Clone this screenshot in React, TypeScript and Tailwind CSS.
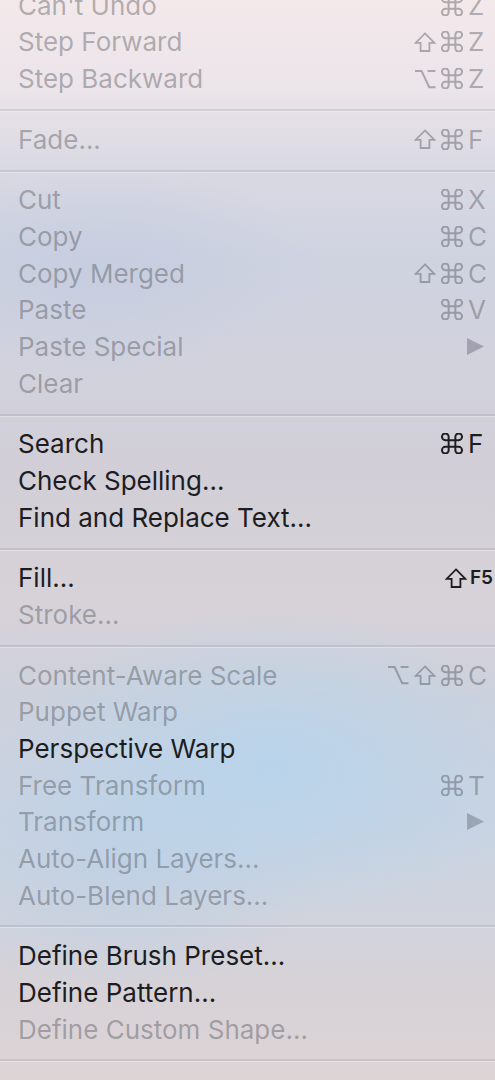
import React from 'react'

type Item = {
  label: string
  enabled?: boolean
  keys?: string[]
  fkey?: string
  submenu?: boolean
}

type Entry = Item | 'sep'

const menu: Entry[] = [
  { label: "Can't Undo", keys: ['cmd', 'Z'] },
  { label: 'Step Forward', keys: ['shift', 'cmd', 'Z'] },
  { label: 'Step Backward', keys: ['opt', 'cmd', 'Z'] },
  'sep',
  { label: 'Fade...', keys: ['shift', 'cmd', 'F'] },
  'sep',
  { label: 'Cut', keys: ['cmd', 'X'] },
  { label: 'Copy', keys: ['cmd', 'C'] },
  { label: 'Copy Merged', keys: ['shift', 'cmd', 'C'] },
  { label: 'Paste', keys: ['cmd', 'V'] },
  { label: 'Paste Special', submenu: true },
  { label: 'Clear' },
  'sep',
  { label: 'Search', enabled: true, keys: ['cmd', 'F'] },
  { label: 'Check Spelling...', enabled: true },
  { label: 'Find and Replace Text...', enabled: true },
  'sep',
  { label: 'Fill...', enabled: true, fkey: 'F5' },
  { label: 'Stroke...' },
  'sep',
  { label: 'Content-Aware Scale', keys: ['opt', 'shift', 'cmd', 'C'] },
  { label: 'Puppet Warp' },
  { label: 'Perspective Warp', enabled: true },
  { label: 'Free Transform', keys: ['cmd', 'T'] },
  { label: 'Transform', submenu: true },
  { label: 'Auto-Align Layers...' },
  { label: 'Auto-Blend Layers...' },
  'sep',
  { label: 'Define Brush Preset...', enabled: true },
  { label: 'Define Pattern...', enabled: true },
  { label: 'Define Custom Shape...' },
  'sep',
]

// modifier glyphs drawn so their strokes match the mac menu ones
function Glyph({ name }: { name: string }) {
  if (name === 'shift') {
    return (
      <svg width="22" height="20" viewBox="0 0 22 20" fill="none" stroke="currentColor" strokeWidth="1.8">
        <polygon points="11,1.4 20.4,10.8 15.4,10.8 15.4,19 6.6,19 6.6,10.8 1.6,10.8" strokeLinejoin="miter" />
      </svg>
    )
  }
  if (name === 'opt') {
    return (
      <svg width="22" height="20" viewBox="0 0 22 20" fill="none" stroke="currentColor" strokeWidth="1.9">
        <path d="M1 2h6.6l7.6 16.2H21.5" />
        <path d="M13.6 2h7.9" />
      </svg>
    )
  }
  return (
    <svg width="22" height="21" viewBox="2.6 2.6 18.8 18.8" fill="none" stroke="currentColor" strokeWidth="1.75">
      <path d="M15 6v12a3 3 0 1 0 3-3H6a3 3 0 1 0 3 3V6a3 3 0 1 0-3 3h12a3 3 0 1 0-3-3" />
    </svg>
  )
}

function Key({ k }: { k: string }) {
  if (k.length > 1) {
    return (
      <span className="inline-flex w-[27px] items-center">
        <Glyph name={k} />
      </span>
    )
  }
  return <span className="inline-block w-[17px] text-left">{k}</span>
}

function Row({ item }: { item: Item }) {
  const color = item.enabled ? 'text-[#1d1d1f]' : 'text-[rgba(55,58,66,0.37)]'
  return (
    <div className={`flex h-[36.67px] items-center justify-between pl-[18px] pr-[10px] ${color}`}>
      <span className="whitespace-nowrap">{item.label}</span>
      {item.keys && (
        <span className="flex items-center">
          {item.keys.map((k, i) => (
            <Key key={i} k={k} />
          ))}
        </span>
      )}
      {item.fkey && (
        <span className="mr-[-8px] flex items-center">
          <span className="inline-flex w-[25px] items-center">
            <Glyph name="shift" />
          </span>
          <span className="text-[19px] font-semibold">{item.fkey}</span>
        </span>
      )}
      {item.submenu && (
        <svg width="17" height="17" viewBox="0 0 17 17" className="mr-[1px]">
          <polygon points="0,0 17,8.5 0,17" fill="rgba(60,66,80,0.32)" />
        </svg>
      )}
    </div>
  )
}

function Separator() {
  return (
    <div className="pt-[12px] pb-[9px]">
      <div className="h-[2px] bg-[rgba(90,90,110,0.14)]" />
      <div className="h-px bg-white/30" />
    </div>
  )
}

export default function App() {
  return (
    <div className="h-[1080px] w-[495px] overflow-hidden bg-[radial-gradient(ellipse_55%_14%_at_55%_71%,rgba(182,212,236,0.9),transparent),radial-gradient(ellipse_45%_10%_at_20%_25%,rgba(196,204,224,0.8),transparent),radial-gradient(ellipse_40%_12%_at_25%_80%,rgba(190,208,228,0.8),transparent),linear-gradient(to_bottom,#f3e9eb_0px,#ebe4e9_90px,#d9d9e3_170px,#cfd3e0_260px,#d2d2dc_380px,#d1ced7_460px,#d7d2d8_600px,#cdd1dc_700px,#c9d3e2_820px,#d2d3dc_930px,#d8d2d6_1000px,#ddd4d6_1080px)] font-['Inter','Noto_Sans',sans-serif] text-[26px]">
      <div className="mt-[-13px]">
        {menu.map((e, i) => (e === 'sep' ? <Separator key={i} /> : <Row key={i} item={e} />))}
      </div>
    </div>
  )
}
